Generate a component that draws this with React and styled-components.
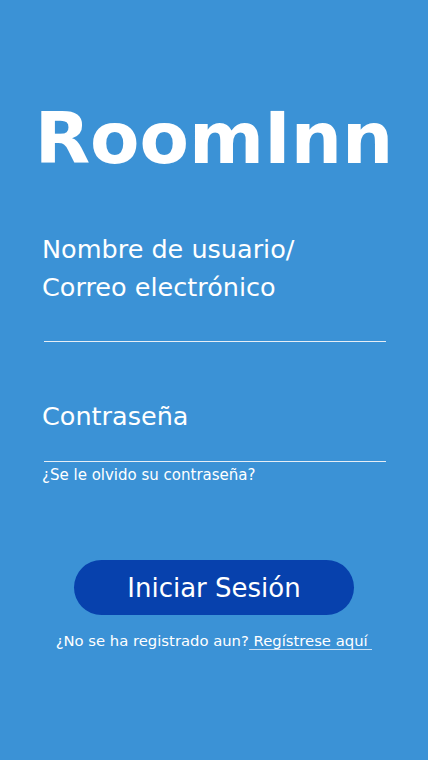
import styled, { createGlobalStyle } from 'styled-components'

const GlobalStyle = createGlobalStyle`
  html, body {
    margin: 0;
    padding: 0;
    background: #3b92d6;
  }
  body {
    font-family: "DejaVu Sans", Verdana, sans-serif;
    color: #ffffff;
  }
`

export default function App() {
  return (
    <>
      <GlobalStyle />
      <Screen>
        <Logo>RoomInn</Logo>
        <Form>
          <Field>
            <Label>
              Nombre de usuario/
              <br />
              Correo electrónico
            </Label>
            <Input type="text" aria-label="Nombre de usuario" />
          </Field>
          <Field $top={55}>
            <Label>Contraseña</Label>
            <Input type="password" aria-label="Contraseña" $height={26} />
            <Forgot href="#">¿Se le olvido su contraseña?</Forgot>
          </Field>
        </Form>
        <SubmitButton type="button">Iniciar Sesión</SubmitButton>
        <Register>
          ¿No se ha registrado aun?
          <RegisterLink href="#"> Regístrese aquí </RegisterLink>
        </Register>
      </Screen>
    </>
  )
}

const Screen = styled.main`
  width: 428px;
  min-height: 760px;
  box-sizing: border-box;
  display: flex;
  flex-direction: column;
  align-items: center;
  padding-top: 98px;
`

const Logo = styled.h1`
  margin: 0;
  font-size: 72px;
  font-weight: 700;
  line-height: 80px;
  letter-spacing: 0;
`

const Form = styled.form`
  align-self: stretch;
  display: flex;
  flex-direction: column;
  padding: 0 42px 0 42px;
  margin-top: 52px;
`

const Field = styled.div`
  display: flex;
  flex-direction: column;
  margin-top: ${p => p.$top || 0}px;
`

const Label = styled.label`
  font-size: 25.5px;
  line-height: 38px;
`

const Input = styled.input`
  margin: 0 0 0 2px;
  height: ${p => p.$height || 35}px;
  padding: 0;
  border: none;
  border-bottom: 1.5px solid #e6eef6;
  background: transparent;
  color: #ffffff;
  font-family: inherit;
  font-size: 18px;
  outline: none;
`

const Forgot = styled.a`
  margin-top: 3px;
  font-size: 15px;
  line-height: 20px;
  color: #ffffff;
  text-decoration: none;
`

const SubmitButton = styled.button`
  margin-top: 75px;
  width: 280px;
  height: 55px;
  border: none;
  border-radius: 28px;
  background: #0741ad;
  color: #ffffff;
  font-family: inherit;
  font-size: 26px;
  cursor: pointer;
`

const Register = styled.p`
  margin: 14px 0 0 0;
  font-size: 14.8px;
  line-height: 24px;
`

const RegisterLink = styled.a`
  color: #ffffff;
  text-decoration: none;
  border-bottom: 1.5px solid #c9def2;
  white-space: pre;
`
